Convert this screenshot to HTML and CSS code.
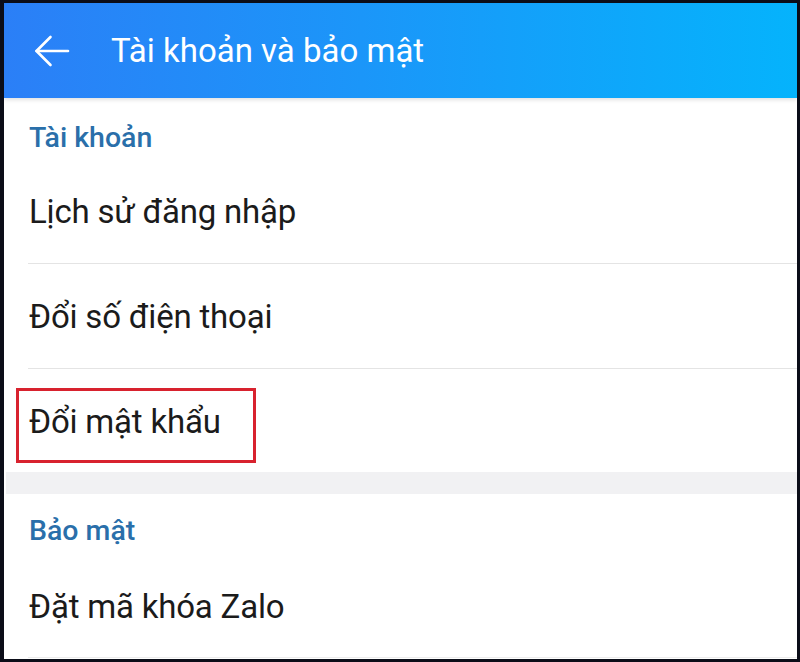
FILE: index.html
```html
<!DOCTYPE html>
<html lang="vi">
<head>
<meta charset="utf-8">
<title>Tài khoản và bảo mật</title>
<link rel="stylesheet" href="styles.css">
</head>
<body>
<div class="frame">
  <header class="appbar">
    <span class="back" aria-label="Quay lại">
      <svg width="36" height="32" viewBox="0 0 36 32" fill="none" stroke="#ffffff" stroke-width="2.6" stroke-linecap="round" stroke-linejoin="round">
        <path d="M34 16H2.5"/>
        <path d="M16.5 2L2.5 16L16.5 30"/>
      </svg>
    </span>
    <h1 class="title">Tài khoản và bảo mật</h1>
  </header>
  <main class="content">
    <section class="group">
      <h2 class="group-title">Tài khoản</h2>
      <div class="item">Lịch sử đăng nhập</div>
      <div class="item">Đổi số điện thoại</div>
      <div class="item item-last">Đổi mật khẩu<span class="mark"></span></div>
    </section>
    <div class="spacer"></div>
    <section class="group">
      <h2 class="group-title group-title-2">Bảo mật</h2>
      <div class="item item-bottom">Đặt mã khóa Zalo</div>
    </section>
  </main>
</div>
</body>
</html>
```

FILE: styles.css
```css
html, body {
  margin: 0;
  padding: 0;
  background: #ffffff;
}

.frame {
  box-sizing: border-box;
  width: 800px;
  height: 662px;
  border-style: solid;
  border-color: #0b0d18;
  border-width: 3px 3px 3px 4px;
  display: flex;
  flex-direction: column;
  overflow: hidden;
  font-family: Roboto, "Noto Sans", "Liberation Sans", sans-serif;
  background: #ffffff;
}

.appbar {
  flex: 0 0 95px;
  display: flex;
  align-items: center;
  background: linear-gradient(90deg, #2b7ff7 0%, #1b96f9 45%, #05b3fc 100%);
  box-shadow: 0 2px 4px rgba(0, 0, 0, 0.12);
  position: relative;
  z-index: 1;
}

.back {
  display: flex;
  margin-left: 30px;
  width: 36px;
  height: 32px;
}

.title {
  margin: 0 0 0 41px;
  font-size: 33px;
  font-weight: 400;
  color: #ffffff;
  line-height: 38px;
}

.content {
  flex: 1;
  display: flex;
  flex-direction: column;
}

.group-title {
  margin: 0;
  padding: 23px 0 5px 25px;
  font-size: 28.5px;
  font-weight: 500;
  color: #2a6faa;
  line-height: 33px;
}

.group-title-2 {
  padding-top: 20px;
  padding-bottom: 7px;
}

.item {
  box-sizing: border-box;
  height: 105px;
  display: flex;
  align-items: center;
  margin-left: 24px;
  padding-left: 1px;
  padding-top: 2px;
  font-size: 33px;
  letter-spacing: -0.2px;
  color: #1b1b1b;
  line-height: 38px;
  border-bottom: 1px solid #e4e4e4;
  position: relative;
}

.item-last {
  height: 103px;
  border-bottom: none;
}

.item-bottom {
  height: 104px;
  border-bottom-color: #ececec;
}

.mark {
  position: absolute;
  left: -12px;
  top: 19px;
  width: 240px;
  height: 75px;
  box-sizing: border-box;
  border: 3px solid #d8222e;
}

.spacer {
  height: 22px;
  background: #f1f1f3;
  margin-left: 2px;
}
```
